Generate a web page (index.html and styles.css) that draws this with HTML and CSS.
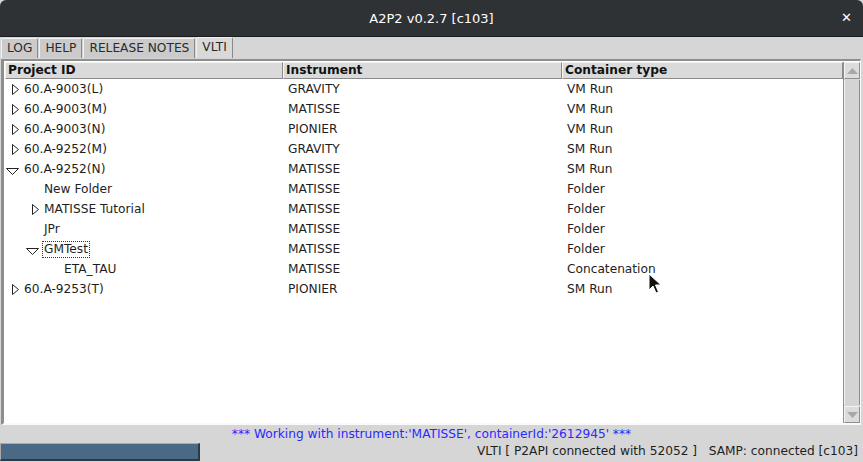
FILE: index.html
```html
<!DOCTYPE html>
<html>
<head>
<meta charset="utf-8">
<link rel="stylesheet" href="styles.css">
</head>
<body>
<div class="window">
  <div class="titlebar">
    <span class="title">A2P2 v0.2.7 [c103]</span>
    <span class="close">&#x2715;</span>
  </div>
  <div class="tabs">
    <div class="tab">LOG</div>
    <div class="tab">HELP</div>
    <div class="tab">RELEASE NOTES</div>
    <div class="tab selected">VLTI</div>
  </div>
  <div class="panel">
    <div class="tablebox">
      <div class="tablemain">
        <div class="header">
          <div class="hcell c1">Project ID</div>
          <div class="hcell c2">Instrument</div>
          <div class="hcell c3">Container type</div>
        </div>
        <div class="rows">
          <div class="row"><div class="cell c1 l0"><span class="tw"><svg class="tri-r" width="7" height="11" viewBox="0 0 7 11"><path d="M0.5 0.5 L6.5 5.5 L0.5 10.5 Z" fill="none" stroke="#222" stroke-width="1"/></svg></span><span>60.A-9003(L)</span></div><div class="cell c2">GRAVITY</div><div class="cell c3">VM Run</div></div>
          <div class="row"><div class="cell c1 l0"><span class="tw"><svg class="tri-r" width="7" height="11" viewBox="0 0 7 11"><path d="M0.5 0.5 L6.5 5.5 L0.5 10.5 Z" fill="none" stroke="#222" stroke-width="1"/></svg></span><span>60.A-9003(M)</span></div><div class="cell c2">MATISSE</div><div class="cell c3">VM Run</div></div>
          <div class="row"><div class="cell c1 l0"><span class="tw"><svg class="tri-r" width="7" height="11" viewBox="0 0 7 11"><path d="M0.5 0.5 L6.5 5.5 L0.5 10.5 Z" fill="none" stroke="#222" stroke-width="1"/></svg></span><span>60.A-9003(N)</span></div><div class="cell c2">PIONIER</div><div class="cell c3">VM Run</div></div>
          <div class="row"><div class="cell c1 l0"><span class="tw"><svg class="tri-r" width="7" height="11" viewBox="0 0 7 11"><path d="M0.5 0.5 L6.5 5.5 L0.5 10.5 Z" fill="none" stroke="#222" stroke-width="1"/></svg></span><span>60.A-9252(M)</span></div><div class="cell c2">GRAVITY</div><div class="cell c3">SM Run</div></div>
          <div class="row"><div class="cell c1 l0"><span class="tw"><svg class="tri-d" width="13" height="7" viewBox="0 0 13 7"><path d="M0.5 0.5 L12.5 0.5 L6.5 6.5 Z" fill="none" stroke="#222" stroke-width="1"/></svg></span><span>60.A-9252(N)</span></div><div class="cell c2">MATISSE</div><div class="cell c3">SM Run</div></div>
          <div class="row"><div class="cell c1 l1"><span class="tw"></span><span>New Folder</span></div><div class="cell c2">MATISSE</div><div class="cell c3">Folder</div></div>
          <div class="row"><div class="cell c1 l1"><span class="tw"><svg class="tri-r" width="7" height="11" viewBox="0 0 7 11"><path d="M0.5 0.5 L6.5 5.5 L0.5 10.5 Z" fill="none" stroke="#222" stroke-width="1"/></svg></span><span>MATISSE Tutorial</span></div><div class="cell c2">MATISSE</div><div class="cell c3">Folder</div></div>
          <div class="row"><div class="cell c1 l1"><span class="tw"></span><span>JPr</span></div><div class="cell c2">MATISSE</div><div class="cell c3">Folder</div></div>
          <div class="row"><div class="cell c1 l1"><span class="tw"><svg class="tri-d" width="13" height="7" viewBox="0 0 13 7"><path d="M0.5 0.5 L12.5 0.5 L6.5 6.5 Z" fill="none" stroke="#222" stroke-width="1"/></svg></span><span class="focus">GMTest</span></div><div class="cell c2">MATISSE</div><div class="cell c3">Folder</div></div>
          <div class="row"><div class="cell c1 l2"><span class="tw"></span><span>ETA_TAU</span></div><div class="cell c2">MATISSE</div><div class="cell c3">Concatenation</div></div>
          <div class="row"><div class="cell c1 l0"><span class="tw"><svg class="tri-r" width="7" height="11" viewBox="0 0 7 11"><path d="M0.5 0.5 L6.5 5.5 L0.5 10.5 Z" fill="none" stroke="#222" stroke-width="1"/></svg></span><span>60.A-9253(T)</span></div><div class="cell c2">PIONIER</div><div class="cell c3">SM Run</div></div>
        </div>
      </div>
      <div class="scrollbar">
        <div class="sbtn"><svg width="11" height="6" viewBox="0 0 11 6"><path d="M0 6 L5.5 0 L11 6 Z" fill="#a8a8a8"/></svg></div>
        <div class="strack"></div>
        <div class="sbtn"><svg width="11" height="6" viewBox="0 0 11 6"><path d="M0 0 L5.5 6 L11 0 Z" fill="#a8a8a8"/></svg></div>
      </div>
    </div>
  </div>
  <div class="status">*** Working with instrument:'MATISSE', containerId:'2612945' ***</div>
  <div class="bottombar">
    <div class="progress"></div>
    <div class="conn">VLTI [ P2API connected with 52052 ]&nbsp;&nbsp;&nbsp;SAMP: connected [c103]</div>
  </div>
  <svg class="cursor" width="14" height="22" viewBox="0 0 14 22"><path d="M1 1 L1 17 L5 13 L8 20 L10.5 19 L7.5 12 L13 12 Z" fill="#111" stroke="#fff" stroke-width="1"/></svg>
</div>
</body>
</html>
```

FILE: styles.css
```css
* { box-sizing: border-box; }
html, body { margin: 0; padding: 0; }
body {
  width: 863px;
  height: 462px;
  overflow: hidden;
  font-family: "DejaVu Sans", sans-serif;
  font-size: 12.2px;
  color: #222;
  background: #d6d6d6;
}
.window {
  position: relative;
  width: 863px;
  height: 462px;
  display: flex;
  flex-direction: column;
  background: #d6d6d6;
}
.titlebar {
  height: 37px;
  flex: none;
  background: #2f3234;
  border-radius: 6px 6px 0 0;
  border-bottom: 1px solid #1b1c1d;
  display: flex;
  align-items: center;
  justify-content: center;
  position: relative;
}
.title {
  color: #ffffff;
  font-size: 13px;
  font-family: "DejaVu Sans", sans-serif;
}
.close {
  position: absolute;
  right: 11px;
  top: 10px;
  color: #ffffff;
  font-size: 13px;
  font-weight: bold;
}
.tabs {
  height: 21px;
  flex: none;
  display: flex;
  padding-left: 1px;
  align-items: flex-end;
}
.tab {
  height: 20px;
  padding: 0 5px;
  margin-right: 1px;
  background: #cbcbcb;
  border-top: 1px solid #f0f0f0;
  border-left: 1px solid #f0f0f0;
  border-right: 1px solid #8a8a8a;
  border-radius: 2px 2px 0 0;
  color: #2a2a2a;
  font-size: 12.2px;
  line-height: 19px;
}
.tab.selected {
  background: #d9d9d9;
  height: 21px;
}
.panel {
  flex: none;
  padding: 1px 2px 0 1px;
}
.tablebox {
  height: 366px;
  display: flex;
  border-top: 2px solid #8e8e8e;
  border-left: 3px solid #8e8e8e;
  border-right: 1px solid #fafafa;
  border-bottom: 2px solid #fafafa;
  background: #ffffff;
  padding: 1px 0 0 1px;
}
.tablemain {
  flex: 1;
  display: flex;
  flex-direction: column;
}
.header {
  display: flex;
  height: 17px;
}
.hcell {
  font-weight: bold;
  font-size: 12.2px;
  line-height: 15px;
  padding-left: 2px;
  background: #dadada;
  border-top: 1px solid #f4f4f4;
  border-left: 1px solid #f4f4f4;
  border-right: 1px solid #8a8a8a;
  border-bottom: 1px solid #8a8a8a;
  color: #111;
  white-space: nowrap;
}
.c1 { width: 278px; }
.c2 { width: 279px; }
.c3 { width: 281px; }
.rows {
  display: flex;
  flex-direction: column;
}
.row {
  display: flex;
  height: 20px;
  align-items: center;
}
.cell {
  font-size: 12.2px;
  white-space: nowrap;
  display: flex;
  align-items: center;
  height: 20px;
  color: #1e1e1e;
}
.cell.c2, .cell.c3 { padding-left: 5px; }
.tw {
  width: 19px;
  height: 20px;
  flex: none;
  position: relative;
}
.l0 .tw { margin-left: 0; }
.l1 .tw { margin-left: 20px; }
.l2 .tw { margin-left: 40px; }
.tri-r { position: absolute; left: 7px; top: 5px; }
.tri-d { position: absolute; left: 1px; top: 9px; }
.focus {
  outline: 1px dotted #333;
  outline-offset: 0;
  padding: 0 1px;
  margin-left: -1px;
  line-height: 15px;
}
.scrollbar {
  width: 17px;
  flex: none;
  display: flex;
  flex-direction: column;
  background: #d6d6d6;
  border-left: 1px solid #8e8e8e;
}
.sbtn {
  height: 17px;
  flex: none;
  display: flex;
  align-items: center;
  justify-content: center;
  background: #dcdcdc;
  border: 1px solid #f4f4f4;
  border-right-color: #8e8e8e;
  border-bottom-color: #8e8e8e;
}
.strack {
  flex: 1;
  background: #d4d4d4;
  border-left: 1px solid #f4f4f4;
  border-right: 1px solid #8e8e8e;
  margin: 1px 0;
}
.status {
  height: 18px;
  flex: none;
  text-align: center;
  color: #2a2aff;
  font-size: 12.2px;
  line-height: 18px;
}
.bottombar {
  flex: 1;
  display: flex;
  align-items: flex-start;
  justify-content: space-between;
  padding-right: 5px;
}
.progress {
  width: 200px;
  height: 18px;
  background: #4a6984;
  border-top: 1px solid #a9a9a9;
  border-left: 1px solid #a9a9a9;
  border-right: 2px solid #2a3a48;
  border-bottom: 2px solid #2a3a48;
}
.conn {
  font-size: 12.2px;
  line-height: 17px;
  color: #1e1e1e;
  white-space: nowrap;
}
.cursor {
  position: absolute;
  left: 648px;
  top: 273px;
}
```
